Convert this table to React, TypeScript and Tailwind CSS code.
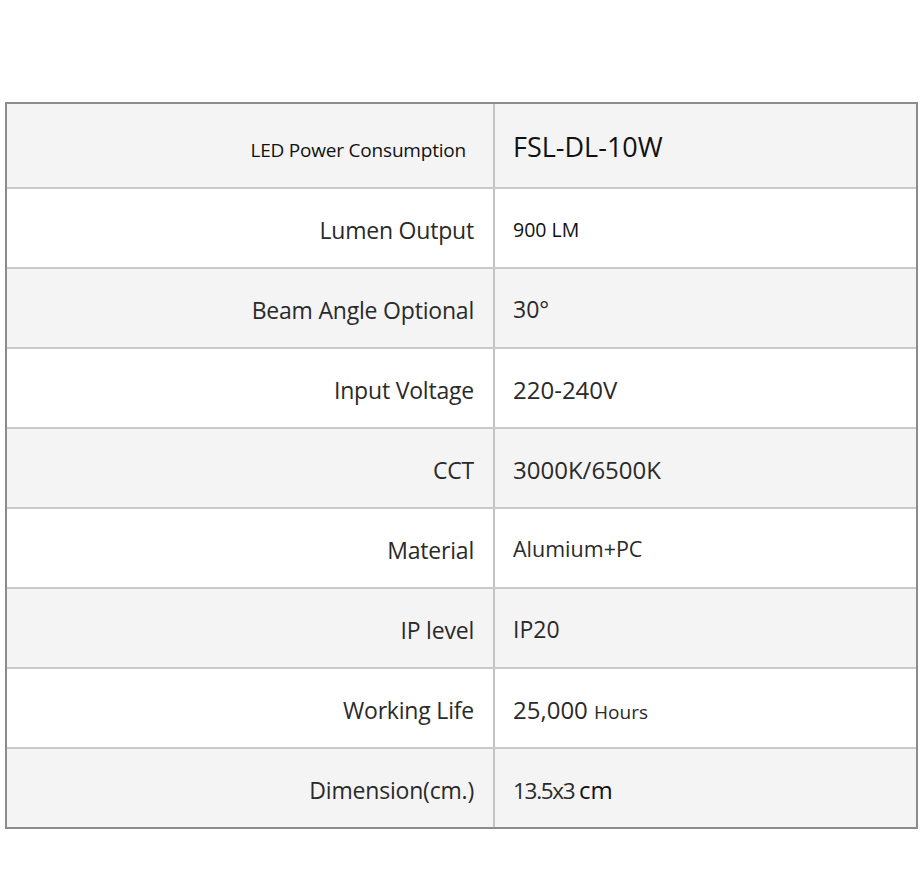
const rows: { label: string; value: React.ReactNode; labelCls?: string; valueCls?: string }[] = [
  { label: 'LED Power Consumption', value: 'FSL-DL-10W', labelCls: 'text-[19px] pr-[27px] pt-[10px] text-[#111]', valueCls: 'text-[27px] text-[#111]' },
  { label: 'Lumen Output', value: '900 LM', valueCls: 'text-[19.5px] font-medium text-[#111]' },
  { label: 'Beam Angle Optional', value: '30°', valueCls: 'text-[23px]' },
  { label: 'Input Voltage', value: '220-240V', valueCls: 'text-[24px]' },
  { label: 'CCT', value: '3000K/6500K', valueCls: 'text-[24px]' },
  { label: 'Material', value: 'Alumium+PC', valueCls: 'text-[21.5px]' },
  { label: 'IP level', value: 'IP20', valueCls: 'text-[23px]' },
  { label: 'Working Life', value: <>25,000 <span className="text-[19px]">Hours</span></>, valueCls: 'text-[24px]' },
  { label: 'Dimension(cm.)', value: <>13.5x3 <span className="text-[24px] tracking-normal text-[#111]">cm</span></>, valueCls: 'text-[22.5px] tracking-[-1.3px]' },
];

export default function App() {
  return (
    <div className="w-[924px] h-[889px] bg-white pt-[102px] pl-[5px]" style={{ fontFamily: '"Open Sans", "Noto Sans", sans-serif' }}>
      <div className="w-[913px] border-2 border-[#8c8c8c] text-[#2a2a2a]">
        {rows.map((r, i) => (
          <div
            key={r.label}
            className={`flex ${i === 0 ? 'h-[83px]' : 'h-[80px] border-t-2 border-[#cacaca]'} ${i % 2 === 0 ? 'bg-[#f4f4f4]' : 'bg-white'}`}
          >
            <div className={`w-[486px] shrink-0 flex items-center justify-end tracking-[-0.2px] ${r.labelCls ?? 'text-[23px] pr-[19px] pt-[5px]'}`}>
              <span>{r.label}</span>
            </div>
            <div className="w-[2px] bg-[#c4c4c4]" />
            <div className={`flex-1 flex items-center pl-[18px] pt-[3px] ${r.valueCls ?? ''}`}>
              <span>{r.value}</span>
            </div>
          </div>
        ))}
      </div>
    </div>
  );
}
